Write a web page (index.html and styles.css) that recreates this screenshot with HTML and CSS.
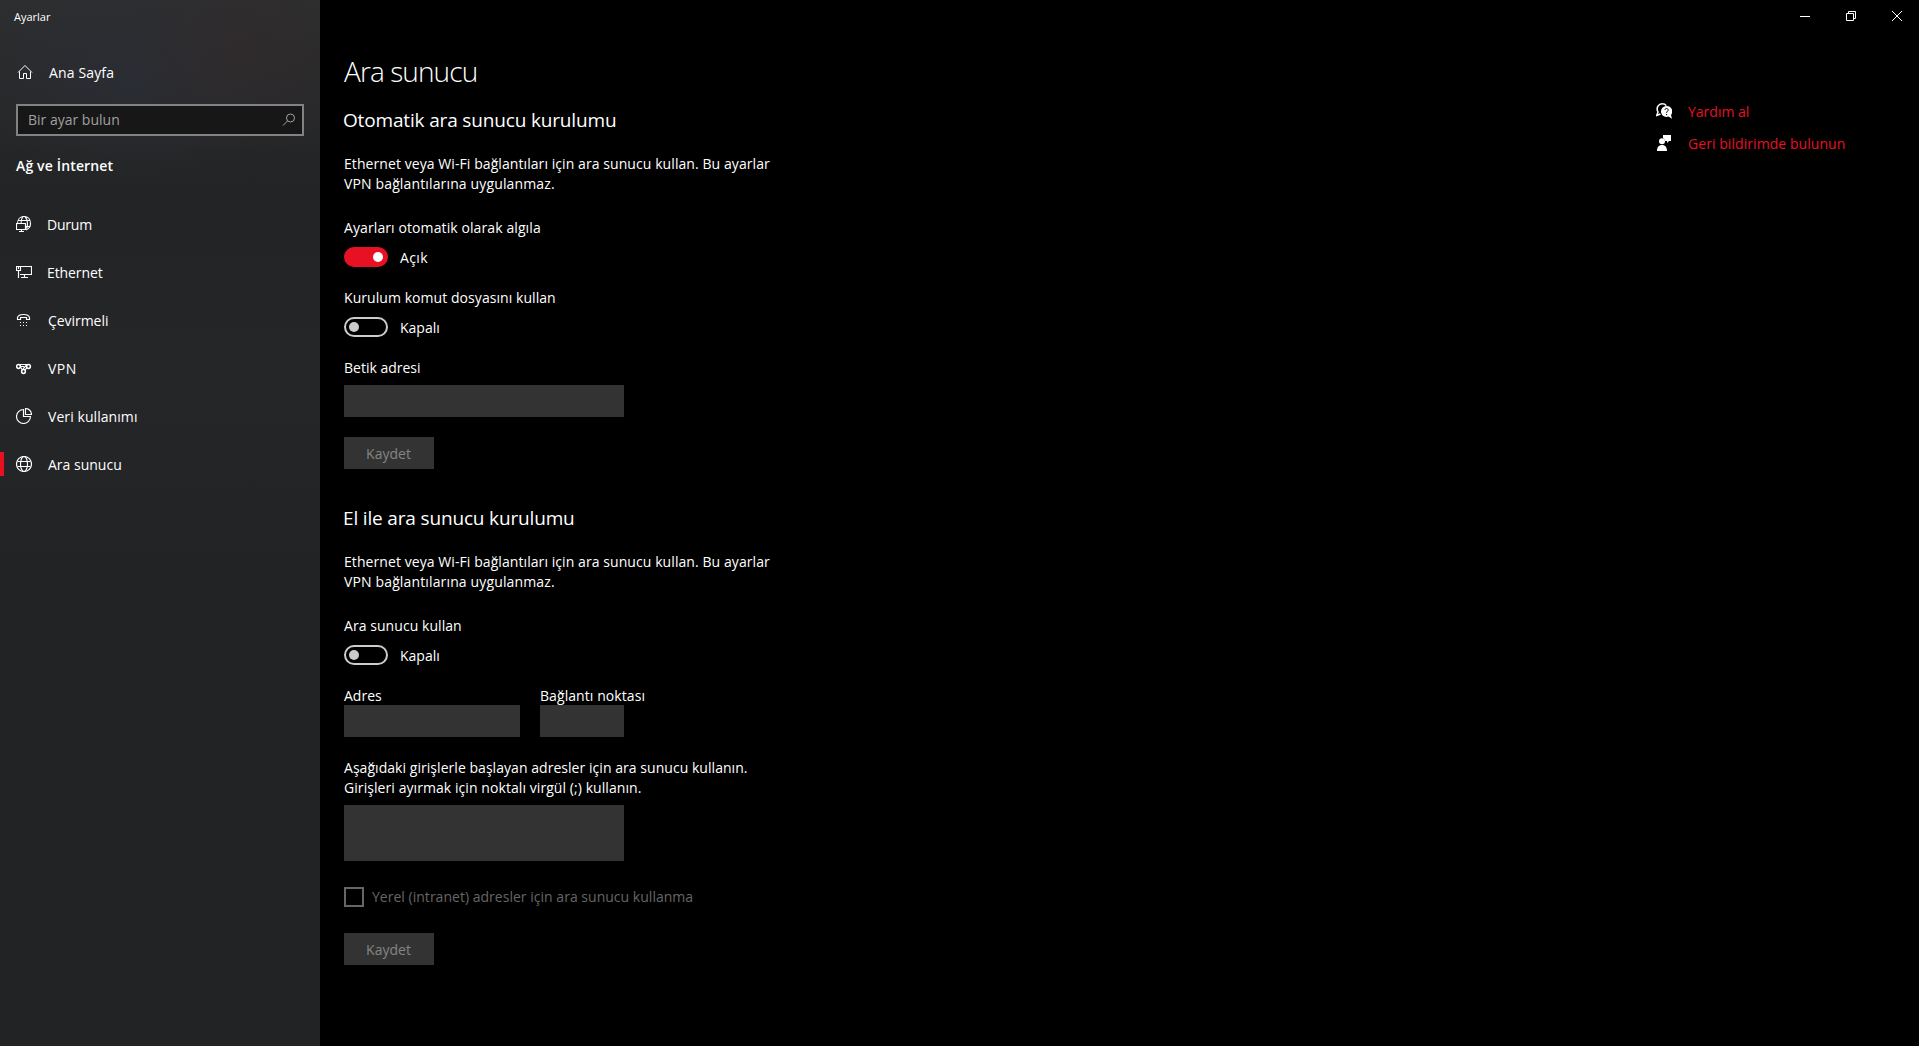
FILE: index.html
```html
<!DOCTYPE html>
<html lang="tr">
<head>
<meta charset="utf-8">
<title>Ayarlar</title>
<link rel="stylesheet" href="styles.css">
</head>
<body>
<div class="window">
  <aside class="sidebar">
    <div class="app-title"><span class="t t-title">Ayarlar</span></div>
    <a class="home">
      <svg class="icon" viewBox="0 0 16 16"><path d="M1 8.5 8 1.5l7 7M2.5 7.5v7h4v-5h3v5h4v-7"/></svg>
      <span class="t t-home">Ana Sayfa</span>
    </a>
    <div class="search">
      <span class="t t-search">Bir ayar bulun</span>
      <svg class="icon search-icon" viewBox="0 0 16 16"><circle cx="9.5" cy="6" r="4"/><path d="M6.6 8.9 2 13.5"/></svg>
    </div>
    <h2 class="category"><span class="t t-category">Ağ ve İnternet</span></h2>
    <nav class="nav">
      <a class="nav-item">
        <svg class="icon" viewBox="0 0 16 16"><path d="M.5 7.5h9v6h-9zM3 15.5h5M5.5 13.5v2M1.5 7.5C1.5 3 4.5.5 8 .5c4 0 6.500 3 6.500 7s-2 5.500-4.500 6.500M7 .5C5.800 2 5 4.500 5 7.500M9 .5c2 2 2.500 4.500 2.500 7 0 2-.3 4-1 5M2.500 4.500h11.500M9.500 10.500h5"/></svg>
        <span class="t t-status">Durum</span>
      </a>
      <a class="nav-item">
        <svg class="icon" viewBox="0 0 16 16"><path d="M5 2.500h10.500v8H4M.5 2.500h4v4h-4zM2.500 6.500v7.500M2.500 3v2M5 13.500h7M8.500 10.500v3"/></svg>
        <span class="t t-ethernet">Ethernet</span>
      </a>
      <a class="nav-item">
        <svg class="icon" viewBox="0 0 16 16"><path d="M1.500 7.500v-2C2 3.500 4.500 2.500 7.500 2.500s5.500 1 6 3v2h-3v-2h-6v2z"/><path class="solid" d="M4 10h1v1H4zM7 10h1v1H7zM10 10h1v1h-1zM4 13h1v1H4zM7 13h1v1H7zM10 13h1v1h-1z"/></svg>
        <span class="t t-dialup">Çevirmeli</span>
      </a>
      <a class="nav-item">
        <svg class="icon" viewBox="0 0 16 16"><circle class="heavy" cx="2.500" cy="6.500" r="1.900"/><circle class="heavy" cx="12.500" cy="6.500" r="1.900"/><circle class="heavy" cx="7.500" cy="11.500" r="1.900"/><path d="M4 4.500h7L7 9M4.500 7l2 3M9 9.800 10.800 8M5 6.500h3"/></svg>
        <span class="t t-vpn">VPN</span>
      </a>
      <a class="nav-item">
        <svg class="icon" viewBox="0 0 16 16"><path d="M7.500 1.500a7 7 0 1 0 7 7h-7zM9.500.5a6 6 0 0 1 6 6h-6z"/></svg>
        <span class="t t-data">Veri kullanımı</span>
      </a>
      <a class="nav-item active">
        <svg class="icon" viewBox="0 0 16 16"><circle cx="8" cy="8" r="7.500"/><ellipse cx="8" cy="8" rx="3.500" ry="7.500"/><path d="M1.500 5.500h13M1.500 10.500h13"/></svg>
        <span class="t t-proxy">Ara sunucu</span>
      </a>
    </nav>
  </aside>

  <main class="content">
    <h1><span class="t t-h1">Ara sunucu</span></h1>
    <div>
      <section class="group">
        <h2><span class="t t-auto">Otomatik ara sunucu kurulumu</span></h2>
        <p><span class="t t-desc1">Ethernet veya Wi-Fi bağlantıları için ara sunucu kullan. Bu ayarlar</span><br><span class="t t-desc2">VPN bağlantılarına uygulanmaz.</span></p>
        <div class="setting">
          <span class="t t-detect">Ayarları otomatik olarak algıla</span>
          <div class="toggle-row"><span class="toggle on"></span><span class="t t-on">Açık</span></div>
        </div>
        <div class="setting">
          <span class="t t-script">Kurulum komut dosyasını kullan</span>
          <div class="toggle-row"><span class="toggle"></span><span class="t t-off">Kapalı</span></div>
        </div>
        <div class="field script-field"><span class="t t-addr">Betik adresi</span><div class="box"></div></div>
        <div class="button"><span class="t t-save">Kaydet</span></div>
      </section>
      <section class="group">
        <h2><span class="t t-manual">El ile ara sunucu kurulumu</span></h2>
        <p><span class="t t-desc1">Ethernet veya Wi-Fi bağlantıları için ara sunucu kullan. Bu ayarlar</span><br><span class="t t-desc2">VPN bağlantılarına uygulanmaz.</span></p>
        <div class="setting">
          <span class="t t-use">Ara sunucu kullan</span>
          <div class="toggle-row"><span class="toggle"></span><span class="t t-off">Kapalı</span></div>
        </div>
        <div class="endpoint">
          <div class="field"><span class="t t-address">Adres</span><div class="box"></div></div>
          <div class="field"><span class="t t-port">Bağlantı noktası</span><div class="box"></div></div>
        </div>
        <div class="exceptions">
          <p><span class="t t-exc1">Aşağıdaki girişlerle başlayan adresler için ara sunucu kullanın.</span><br><span class="t t-exc2">Girişleri ayırmak için noktalı virgül (;) kullanın.</span></p>
          <div class="box tall"></div>
        </div>
        <div class="check-row"><span class="checkbox"></span><span class="t t-local">Yerel (intranet) adresler için ara sunucu kullanma</span></div>
        <div class="button"><span class="t t-save">Kaydet</span></div>
      </section>
    </div>
  </main>

  <div class="right">
    <div class="controls">
      <svg class="icon ctl" viewBox="0 0 10 10"><path d="M0 5.500h10"/></svg>
      <svg class="icon ctl" viewBox="0 0 10 10"><path d="M.5 2.500h7v7h-7zM2.500 2V.5h7v7H8"/></svg>
      <svg class="icon ctl" viewBox="0 0 10 10"><path d="M0 0l10 10M10 0 0 10"/></svg>
    </div>
    <div class="links">
      <a class="link">
        <svg class="icon" viewBox="0 0 16 16"><path class="heavy" d="M4.500 11 .8 12.300 2 9C-.5 4.500 3 .8 6 .8c2 0 3.500.7 4.300 1.800"/><path class="solid" d="M10.500 3a5.500 5.500 0 1 0 2 10.600L16 15.800 15 12A5.500 5.500 0 0 0 10.500 3z"/><path class="mark" d="M9 7c0-2.200 3.200-2 3.200 0 0 1.300-1.600 1.300-1.600 2.800M10.600 11v1.200"/></svg>
        <span class="t t-help">Yardım al</span>
      </a>
      <a class="link">
        <svg class="icon" viewBox="0 0 16 16"><path class="solid" d="M7 0h8v6h-2l-2 2V6H9a3.300 3.300 0 0 0-2-3zM1 16c0-4 2-6 5-6s5 2 5 6z"/><circle class="solid" cx="6" cy="6.200" r="3"/></svg>
        <span class="t t-feedback">Geri bildirimde bulunun</span>
      </a>
    </div>
  </div>
</div>
</body>
</html>
```
FILE: styles.css
```css
* { box-sizing: border-box; }
body {
  margin: 0;
  background: #000;
  color: #fff;
  font: 14px/20px "Open Sans", "Noto Sans", sans-serif;
}
h1, h2, p { margin: 0; font-weight: 400; }
.t { white-space: nowrap; }
.window { display: flex; height: 1046px; overflow: hidden; }

.icon { width: 16px; height: 16px; flex: none; fill: none; stroke: #fff; stroke-width: 1; }
.icon .solid { fill: #fff; stroke: none; }
.icon .heavy { stroke-width: 1.5; }
.icon .mark { stroke: #000; }

.sidebar {
  width: 320px;
  flex: none;
  padding-top: 9px;
  background:
    radial-gradient(ellipse 120px 110px at 240px 50px, rgba(52, 42, 42, .45), transparent),
    radial-gradient(ellipse 160px 110px at 135px 75px, rgba(42, 46, 54, .7), transparent),
    linear-gradient(#2d2e2f, #29292b 100px, #242526 160px, #232425 210px, #252627 380px, #222324 600px, #222324);
}
.app-title { padding-left: 14px; font-size: 11px; line-height: 16px; }
.home { display: flex; gap: 16px; margin-top: 38px; padding-left: 17px; }
.home .icon { margin-top: 1px; }
.search {
  display: flex;
  justify-content: space-between;
  width: 288px;
  height: 32px;
  margin: 21px 0 0 16px;
  padding: 4px 5px 0 10px;
  border: 2px solid #828282;
  background: #171718;
  color: #a0a0a0;
}
.search-icon { margin-top: 2px; stroke: #a0a0a0; }
.category { margin: 20px 0 0 16px; font-size: 14px; font-weight: 600; }
.nav { margin-top: 24px; }
.nav-item { display: flex; align-items: center; gap: 16px; height: 48px; padding-left: 16px; }
.nav-item .t { padding-top: 2px; }
.nav-item .icon { stroke-width: 1.15; }
.active { padding-left: 0; }
.active::before { content: ""; width: 4px; height: 24px; margin-right: -4px; background: #e81123; }

.content { flex: 1; padding: 51px 0 0 24px; }
h1 { height: 41px; font-size: 28px; line-height: 40px; }
.group { height: 398px; padding-top: 14px; }
.group h2 { margin-left: -1px; font-size: 19px; line-height: 28px; }
.group > p { margin-top: 20px; }
.setting { margin-top: 24px; }
.setting + .setting { margin-top: 21px; }
.setting > .t, .field > .t { display: block; }
.toggle-row { display: flex; gap: 12px; height: 20px; margin-top: 9px; }
.toggle-row .t { padding-top: 1px; }
.toggle { display: flex; align-items: center; width: 44px; height: 20px; padding-left: 3px; border: 2px solid #ccc; border-radius: 10px; }
.toggle::before { content: ""; width: 10px; height: 10px; border-radius: 50%; background: #ccc; }
.toggle.on { padding-left: 27px; border-color: #e81123; background: #e81123; }
.toggle.on::before { background: #fff; }
.box { height: 32px; background: #333; }
.field { margin-top: 21px; }
.script-field { width: 280px; }
.script-field .box { margin-top: 7px; }
.button { display: flex; justify-content: center; width: 90px; height: 32px; margin-top: 20px; padding: 7px 1px 0 0; background: #333; color: #858585; }
.endpoint { display: grid; grid-template-columns: 176px 84px; gap: 20px; }
.endpoint .box { margin-top: -1px; }
.exceptions { width: 280px; margin-top: 21px; }
.tall { height: 56px; margin-top: 7px; }
.check-row { display: flex; gap: 8px; margin-top: 26px; color: #666; }
.checkbox { width: 20px; height: 20px; border: 2px solid #666; }
.check-row + .button { margin-top: 26px; }

.right { width: 263px; flex: none; }
.controls { display: flex; gap: 36px; padding: 11px 0 0 144px; }
.ctl { width: 10px; height: 10px; }
.links { display: grid; gap: 12px; padding-top: 81px; }
.link { display: flex; gap: 16px; color: #e81123; }
.link .icon { margin-top: 1px; }

/* per-label tracking */
.t-home, .t-category { letter-spacing: .15px; }
.t-status { margin-left: -1px; letter-spacing: -.2px; }
.t-ethernet { margin-left: -1px; letter-spacing: -.1px; }
.t-dialup { letter-spacing: -.05px; }
.t-vpn { letter-spacing: .5px; }
.t-data { letter-spacing: .07px; }
.t-h1 { font-weight: 350; letter-spacing: -.9px; }
.t-auto, .t-manual { letter-spacing: -.16px; }
.t-desc1, .t-port { letter-spacing: .075px; }
.t-script, .t-feedback { letter-spacing: .06px; }
.t-desc2 { letter-spacing: .14px; }
.t-detect { letter-spacing: .1px; }
.t-on { letter-spacing: .4px; }
.t-use { letter-spacing: .06px; }
.t-exc1 { letter-spacing: .045px; }
.t-exc2 { letter-spacing: .07px; }
.t-local { letter-spacing: .02px; }
```
